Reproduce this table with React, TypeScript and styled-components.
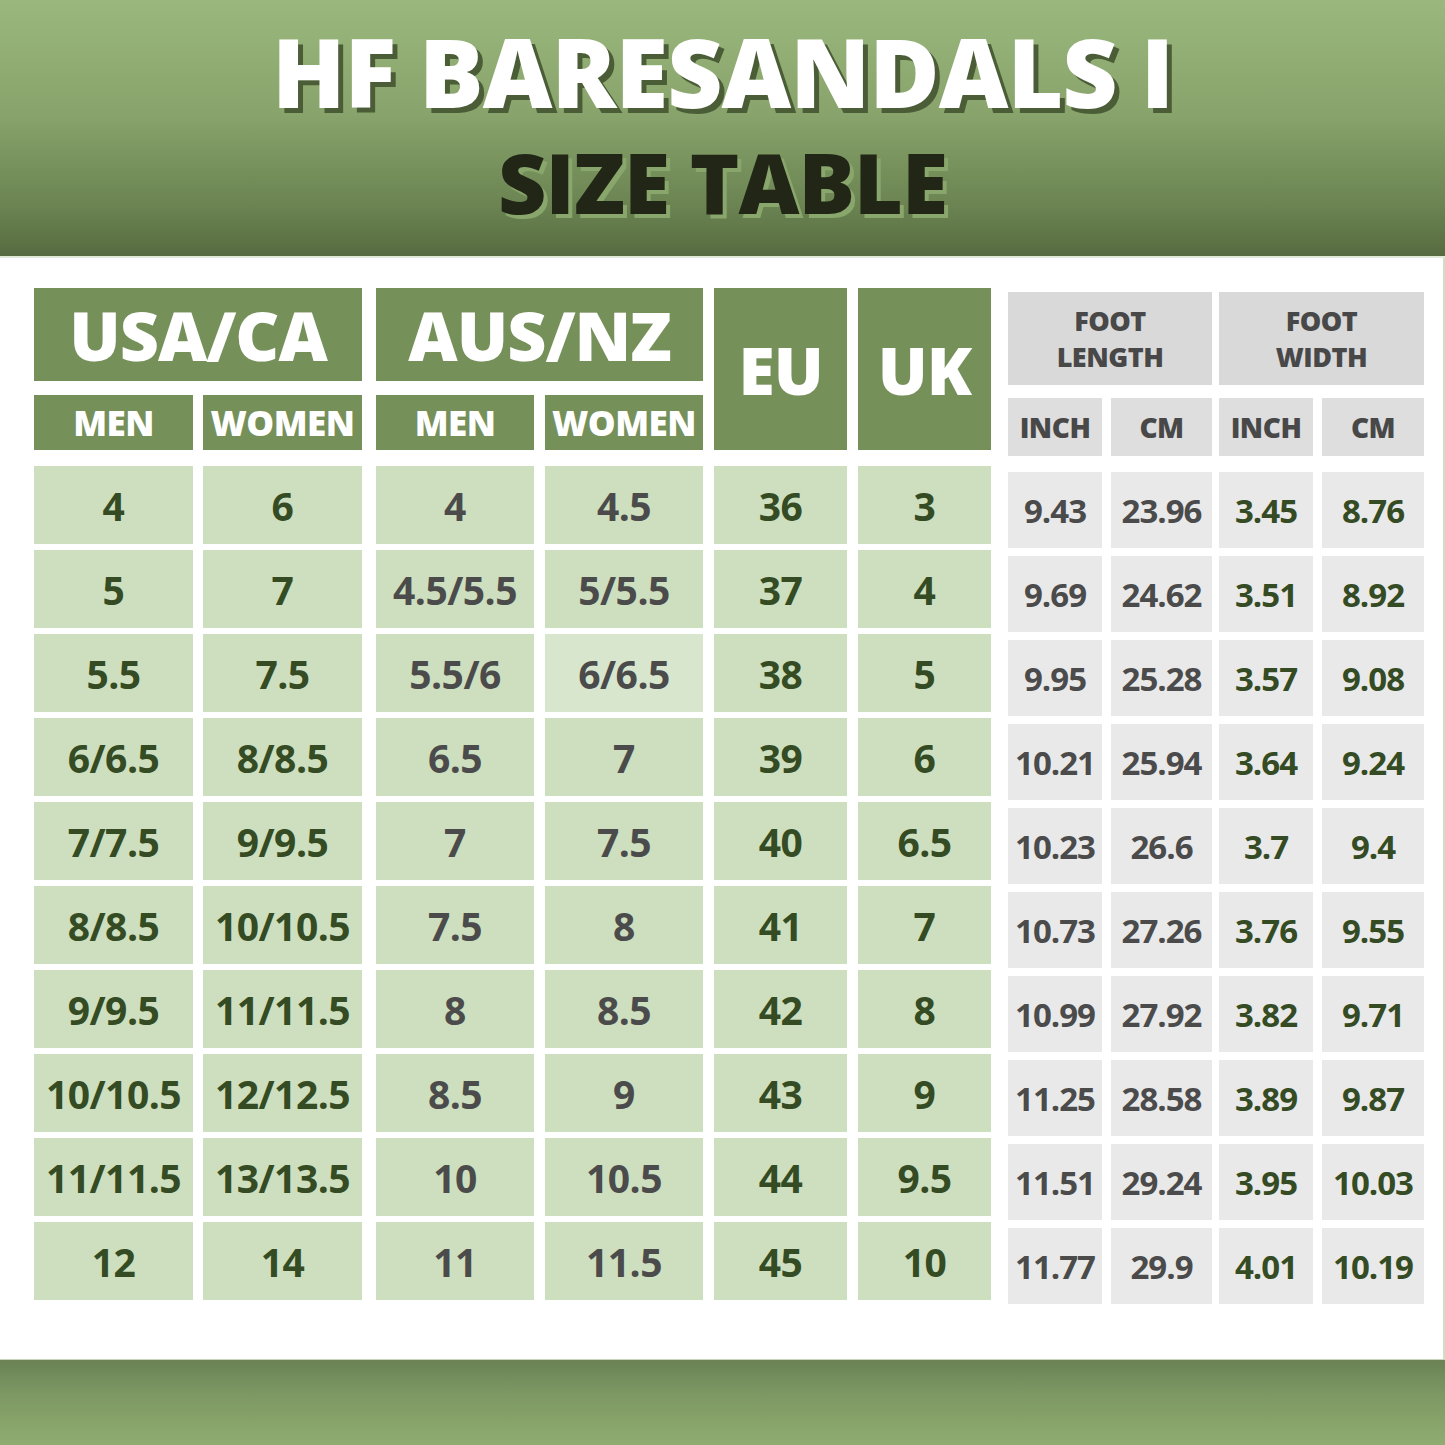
import React from 'react';
import styled, { createGlobalStyle } from 'styled-components';

const GlobalStyle = createGlobalStyle`
  html, body {
    margin: 0;
    padding: 0;
    background: #ffffff;
  }
  body {
    font-family: "Open Sans", "Noto Sans", sans-serif;
  }
`;

const GREEN = '#76905a';
const LIGHT = '#cddfbe';
const DARK_TEXT = '#344b24';
const GRAY_TEXT = '#4b4b4b';

const Page = styled.div`
  width: 1445px;
  height: 1445px;
  display: flex;
  flex-direction: column;
  background: #fff;
  overflow: hidden;
`;

const Banner = styled.header`
  height: 256px;
  flex: none;
  display: flex;
  flex-direction: column;
  align-items: center;
  background: linear-gradient(180deg, #9ab87e 0%, #88a36b 45%, #6b8452 80%, #576b40 100%);
  border-bottom: 2px solid #dfe9d6;
`;

const Title = styled.h1`
  margin: 23px 0 0;
  font-size: 96px;
  line-height: 1;
  font-weight: 800;
  letter-spacing: -1px;
  color: #ffffff;
  text-shadow: 5px 5px 0 #4a5d36;
`;

const Subtitle = styled.h2`
  margin: 21px 0 0;
  font-size: 84px;
  line-height: 1;
  font-weight: 800;
  letter-spacing: -1px;
  color: #222616;
  text-shadow: 4px 4px 0 #89a66c;
`;

const Main = styled.main`
  flex: 1;
  padding: 30px 19px 0 34px;
  border-right: 2px solid #cfe0c1;
`;

const Table = styled.div`
  display: flex;
  align-items: flex-start;
`;

const Group = styled.div<{ $cols: number; $gap: number; $ml: number }>`
  display: grid;
  grid-template-columns: repeat(${(p) => p.$cols}, auto);
  column-gap: ${(p) => p.$gap}px;
  margin-left: ${(p) => p.$ml}px;
`;

const Stack = styled.div`
  display: flex;
  flex-direction: column;
  gap: 6px;
`;

const RegionHead = styled.div<{ $span: number; $h: number }>`
  grid-column: span ${(p) => p.$span};
  height: ${(p) => p.$h}px;
  background: ${GREEN};
  color: #fff;
  font-weight: 800;
  font-size: 68px;
  letter-spacing: -1px;
  display: flex;
  align-items: center;
  justify-content: center;
  margin-bottom: 14px;
`;

const TallHead = styled(RegionHead)`
  font-size: 66px;
  margin-bottom: 16px;
`;

const SubHead = styled.div`
  height: 55px;
  background: ${GREEN};
  color: #fff;
  font-weight: 800;
  font-size: 35px;
  letter-spacing: -0.5px;
  display: flex;
  align-items: center;
  justify-content: center;
  margin-bottom: 16px;
`;

const Cell = styled.div<{ $w: number; $color: string; $bg?: string }>`
  width: ${(p) => p.$w}px;
  height: 78px;
  background: ${(p) => p.$bg || LIGHT};
  color: ${(p) => p.$color};
  font-weight: 700;
  font-size: 39px;
  letter-spacing: -0.5px;
  display: flex;
  align-items: center;
  justify-content: center;
`;

const FootHead = styled.div`
  grid-column: span 2;
  height: 93px;
  margin: 4px 0 13px;
  background: #d9d9d9;
  color: #484848;
  font-weight: 800;
  font-size: 27px;
  line-height: 36px;
  letter-spacing: -0.5px;
  display: flex;
  flex-direction: column;
  align-items: center;
  justify-content: center;
  text-align: center;
`;

const FootSub = styled.div`
  height: 58px;
  background: #dedede;
  color: #484848;
  font-weight: 800;
  font-size: 28px;
  letter-spacing: -0.5px;
  display: flex;
  align-items: center;
  justify-content: center;
  margin-bottom: 16px;
`;

const FootStack = styled.div`
  display: flex;
  flex-direction: column;
  gap: 8px;
`;

const FootCell = styled.div<{ $w: number; $color: string }>`
  width: ${(p) => p.$w}px;
  height: 76px;
  background: #e9e9e9;
  color: ${(p) => p.$color};
  font-weight: 700;
  font-size: 33px;
  letter-spacing: -1px;
  display: flex;
  align-items: center;
  justify-content: center;
`;

const Footer = styled.footer`
  height: 85px;
  flex: none;
  background: linear-gradient(180deg, #6a8254 0%, #7d9863 40%, #8fad71 100%);
  border-top: 1px solid #c9d6bd;
`;

const usaMen = ['4', '5', '5.5', '6/6.5', '7/7.5', '8/8.5', '9/9.5', '10/10.5', '11/11.5', '12'];
const usaWomen = ['6', '7', '7.5', '8/8.5', '9/9.5', '10/10.5', '11/11.5', '12/12.5', '13/13.5', '14'];
const ausMen = ['4', '4.5/5.5', '5.5/6', '6.5', '7', '7.5', '8', '8.5', '10', '11'];
const ausWomen = ['4.5', '5/5.5', '6/6.5', '7', '7.5', '8', '8.5', '9', '10.5', '11.5'];
const eu = ['36', '37', '38', '39', '40', '41', '42', '43', '44', '45'];
const uk = ['3', '4', '5', '6', '6.5', '7', '8', '9', '9.5', '10'];
const lenInch = ['9.43', '9.69', '9.95', '10.21', '10.23', '10.73', '10.99', '11.25', '11.51', '11.77'];
const lenCm = ['23.96', '24.62', '25.28', '25.94', '26.6', '27.26', '27.92', '28.58', '29.24', '29.9'];
const widInch = ['3.45', '3.51', '3.57', '3.64', '3.7', '3.76', '3.82', '3.89', '3.95', '4.01'];
const widCm = ['8.76', '8.92', '9.08', '9.24', '9.4', '9.55', '9.71', '9.87', '10.03', '10.19'];

const Column = ({ values, w, color, light }: { values: string[]; w: number; color: string; light?: number }) => (
  <Stack>
    {values.map((v, i) => (
      <Cell key={i} $w={w} $color={color} $bg={i === light ? '#d9e6ce' : undefined}>
        {v}
      </Cell>
    ))}
  </Stack>
);

const FootColumn = ({ values, w, color }: { values: string[]; w: number; color: string }) => (
  <FootStack>
    {values.map((v, i) => (
      <FootCell key={i} $w={w} $color={color}>
        {v}
      </FootCell>
    ))}
  </FootStack>
);

export default function App() {
  return (
    <Page>
      <GlobalStyle />
      <Banner>
        <Title>HF BARESANDALS I</Title>
        <Subtitle>SIZE TABLE</Subtitle>
      </Banner>
      <Main>
        <Table>
          <Group $cols={2} $gap={10} $ml={0}>
            <RegionHead $span={2} $h={93}>USA/CA</RegionHead>
            <SubHead>MEN</SubHead>
            <SubHead>WOMEN</SubHead>
            <Column values={usaMen} w={159} color={DARK_TEXT} />
            <Column values={usaWomen} w={159} color={DARK_TEXT} />
          </Group>
          <Group $cols={2} $gap={11} $ml={14}>
            <RegionHead $span={2} $h={93}>AUS/NZ</RegionHead>
            <SubHead>MEN</SubHead>
            <SubHead>WOMEN</SubHead>
            <Column values={ausMen} w={158} color={GRAY_TEXT} />
            <Column values={ausWomen} w={158} color={GRAY_TEXT} light={2} />
          </Group>
          <Group $cols={1} $gap={0} $ml={11}>
            <TallHead $span={1} $h={162}>EU</TallHead>
            <Column values={eu} w={133} color={DARK_TEXT} />
          </Group>
          <Group $cols={1} $gap={0} $ml={11}>
            <TallHead $span={1} $h={162}>UK</TallHead>
            <Column values={uk} w={133} color={DARK_TEXT} />
          </Group>
          <Group $cols={2} $gap={9} $ml={17}>
            <FootHead>
              <span>FOOT</span>
              <span>LENGTH</span>
            </FootHead>
            <FootSub>INCH</FootSub>
            <FootSub>CM</FootSub>
            <FootColumn values={lenInch} w={94} color={GRAY_TEXT} />
            <FootColumn values={lenCm} w={101} color={GRAY_TEXT} />
          </Group>
          <Group $cols={2} $gap={9} $ml={7}>
            <FootHead>
              <span>FOOT</span>
              <span>WIDTH</span>
            </FootHead>
            <FootSub>INCH</FootSub>
            <FootSub>CM</FootSub>
            <FootColumn values={widInch} w={94} color={DARK_TEXT} />
            <FootColumn values={widCm} w={102} color={DARK_TEXT} />
          </Group>
        </Table>
      </Main>
      <Footer />
    </Page>
  );
}
